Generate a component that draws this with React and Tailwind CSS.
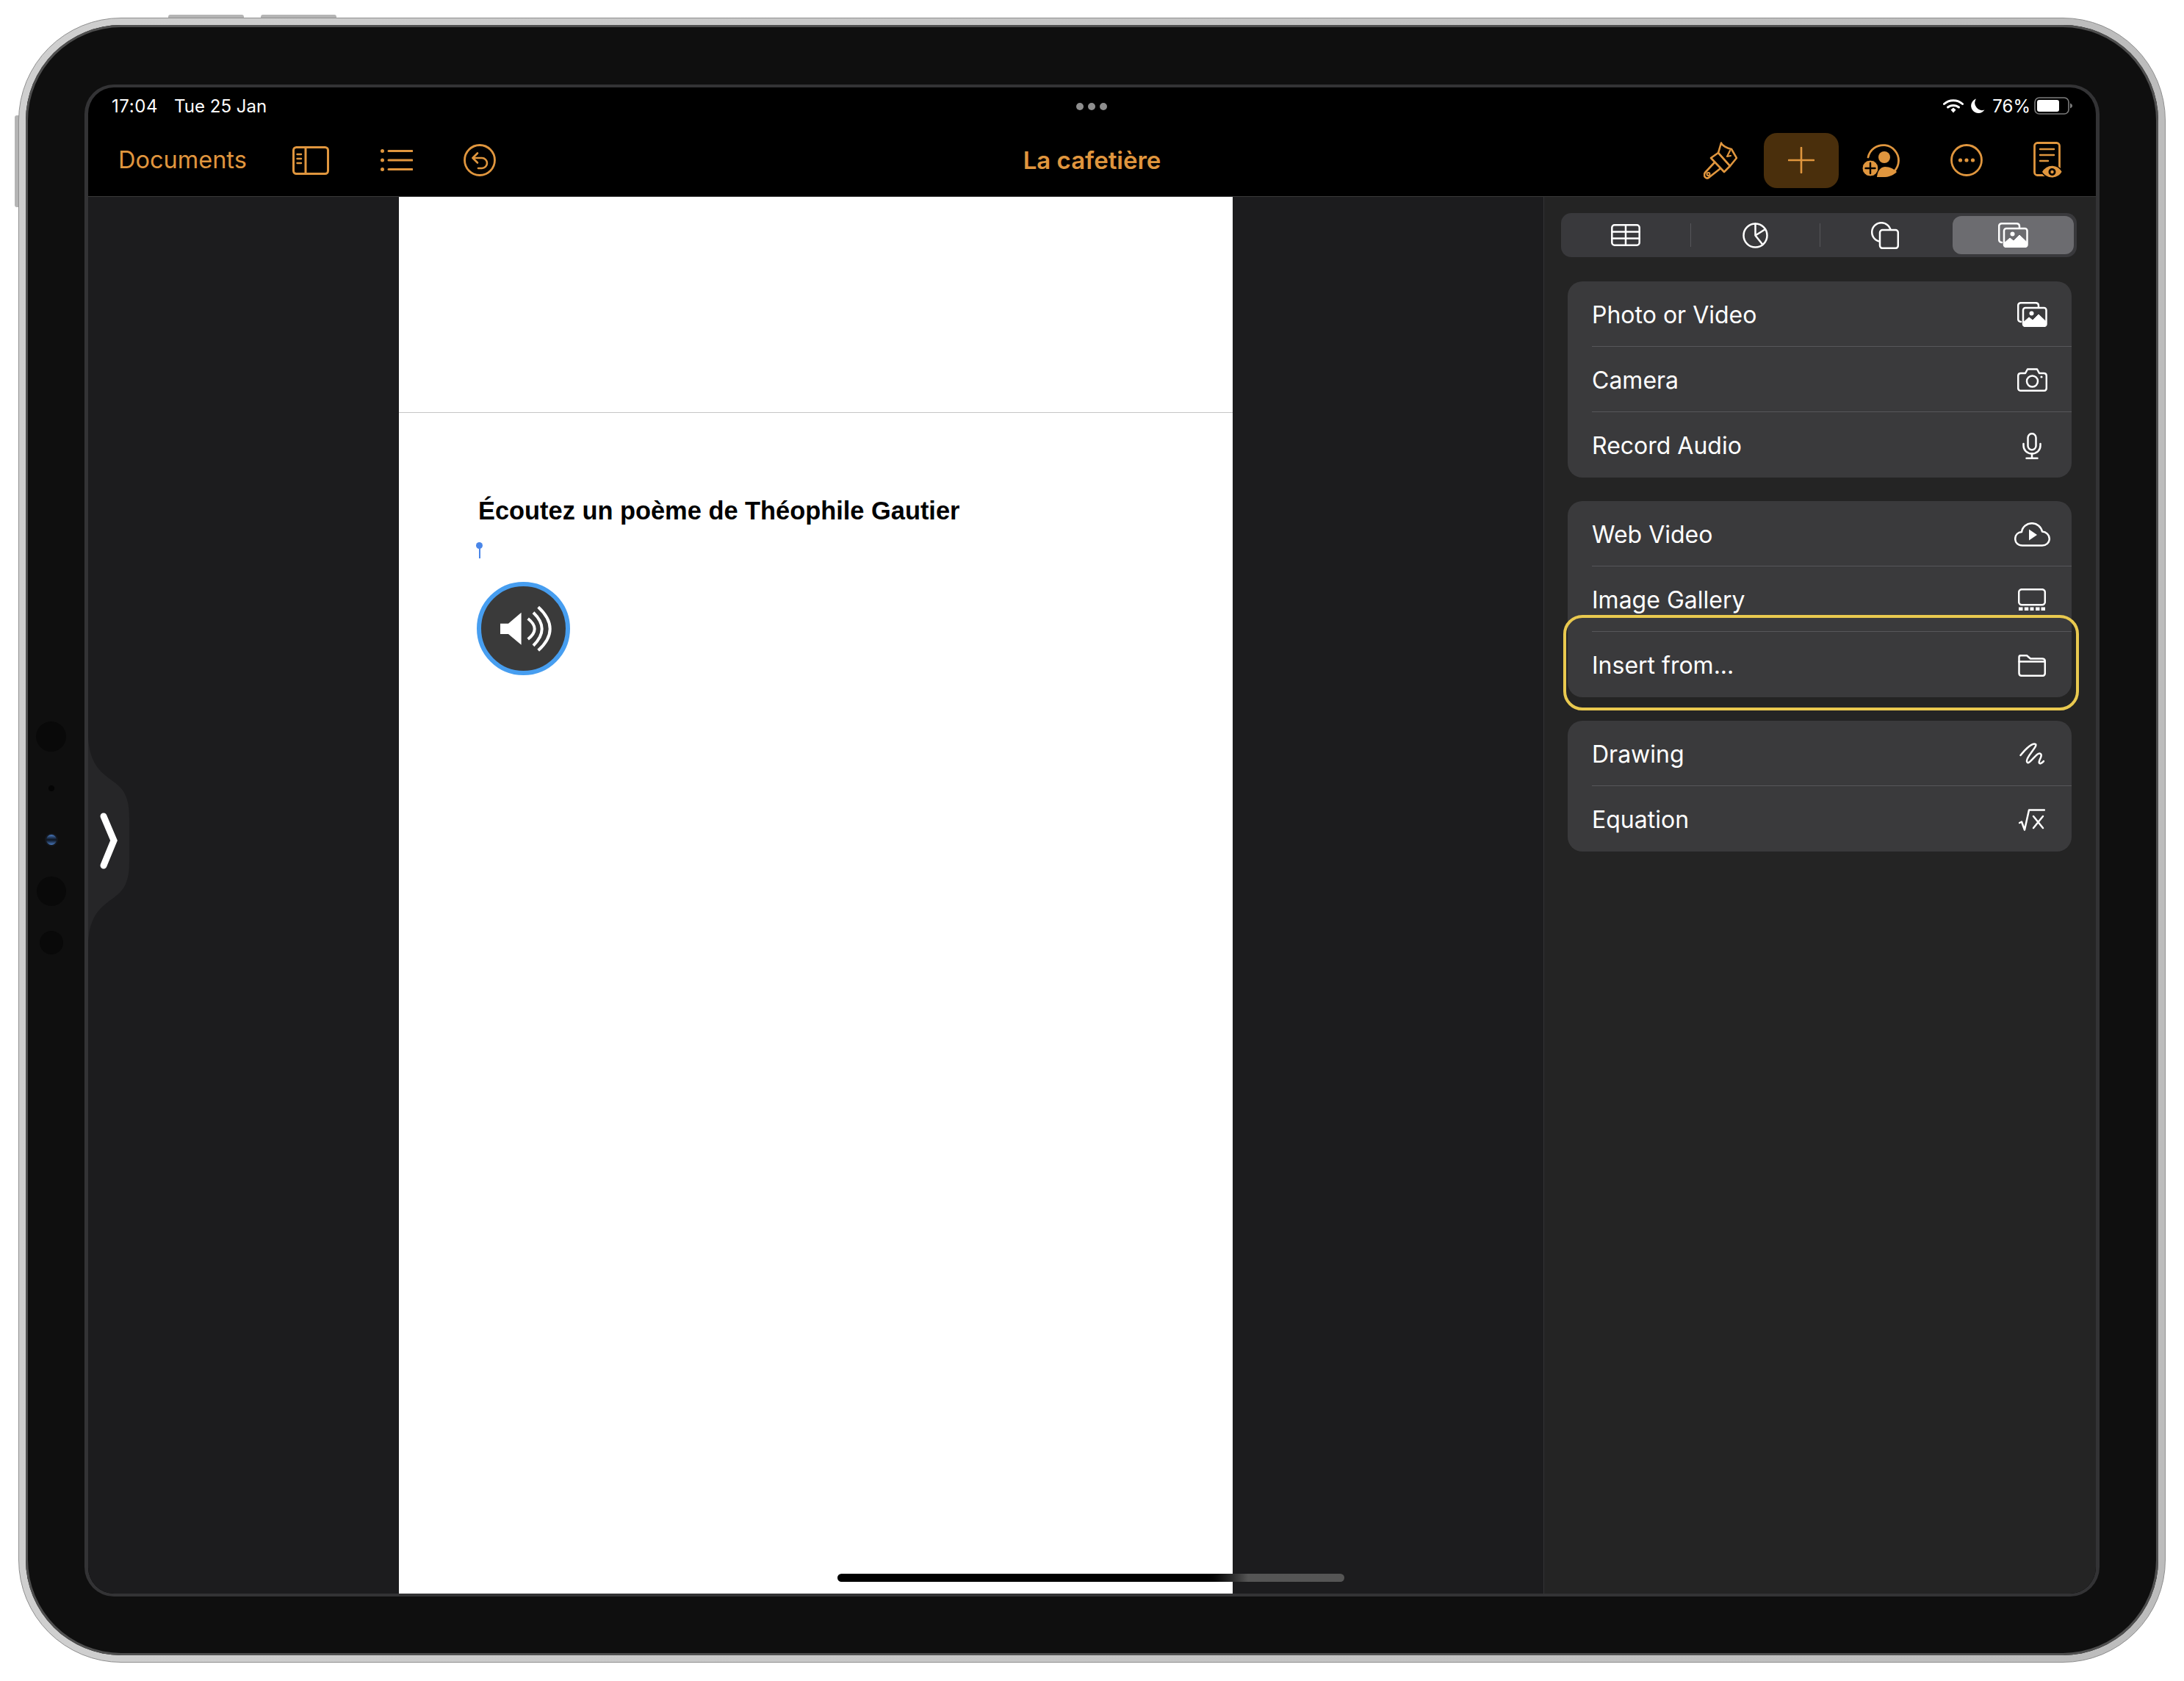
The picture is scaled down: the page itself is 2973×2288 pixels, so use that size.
const ORANGE = "text-[#e0963e]";

const Line = ({ w, h, box, children, className = "" }) => (
  <svg
    width={w}
    height={h}
    viewBox={box || `0 0 ${w} ${h}`}
    fill="none"
    stroke="currentColor"
    strokeWidth="2.5"
    strokeLinecap="round"
    strokeLinejoin="round"
    className={className}
  >
    {children}
  </svg>
);

const PanelIcon = () => (
  <Line w={50} h={39} className={ORANGE}>
    <rect x="1.5" y="1.5" width="47" height="36" rx="4" strokeWidth="3" />
    <path d="M18 2V37" strokeWidth="3" />
    <path d="M6.5 11H12M6.5 17H12M6.5 23H12" strokeWidth="2.4" />
  </Line>
);

const ListIcon = () => (
  <Line w={44} h={30} className={ORANGE}>
    <path d="M11 2.5H43M11 15H43M11 27.5H43" strokeWidth="3" />
    <circle cx="2.5" cy="2.5" r="2.5" fill="currentColor" stroke="none" />
    <circle cx="2.5" cy="15" r="2.5" fill="currentColor" stroke="none" />
    <circle cx="2.5" cy="27.5" r="2.5" fill="currentColor" stroke="none" />
  </Line>
);

const UndoIcon = () => (
  <Line w={44} h={44} className={ORANGE}>
    <circle cx="22" cy="22" r="20.5" strokeWidth="2.8" />
    <path d="M13 19H25A7 7 0 0 1 25 33H20" strokeWidth="2.6" />
    <path d="M19 12.5L12.5 19L19 25.5" strokeWidth="2.6" />
  </Line>
);

const BrushIcon = () => (
  <Line w={46} h={51} className={ORANGE}>
    <path d="M24 1.5C25 5 32 9 38 10L45 22L36 33L20 15Z" strokeWidth="2.6" />
    <path d="M36 12L32 20L37 19" strokeWidth="2.2" />
    <path d="M10 22L20 15L36 33L28 41Z" strokeWidth="2.6" />
    <path d="M15 28L2 42C-1 47 4 52 8 48L22 37" strokeWidth="2.6" />
    <circle cx="6.5" cy="44" r="2" strokeWidth="2" />
  </Line>
);

const PlusIcon = () => (
  <Line w={36} h={36} className={ORANGE}>
    <path d="M18 1V35M1 18H35" strokeWidth="2.6" />
  </Line>
);

const CollabIcon = () => (
  <Line w={52} h={45} className={ORANGE}>
    <path d="M8 18A21 21 0 1 1 30 43.5" strokeWidth="2.8" />
    <circle cx="30" cy="18" r="8" fill="currentColor" stroke="none" />
    <path d="M20 45C21 34 27 31 31 31C38 31 43 34 47 38C43 42 37 45 30 45Z" fill="currentColor" stroke="none" />
    <circle cx="11" cy="33" r="11" fill="currentColor" stroke="#000" strokeWidth="1" />
    <path d="M11 26V40M4.500 33H17.500" stroke="#000" strokeWidth="2.4" />
  </Line>
);

const MoreIcon = () => (
  <Line w={44} h={44} className={ORANGE}>
    <circle cx="22" cy="22" r="20.5" strokeWidth="2.8" />
    <circle cx="13.5" cy="22" r="2.6" fill="currentColor" stroke="none" />
    <circle cx="22" cy="22" r="2.6" fill="currentColor" stroke="none" />
    <circle cx="30.5" cy="22" r="2.6" fill="currentColor" stroke="none" />
  </Line>
);

const DocEyeIcon = () => (
  <Line w={40} h={51} className={ORANGE}>
    <rect x="1.5" y="1.5" width="34" height="44" rx="4" strokeWidth="2.8" />
    <path d="M9 10H28M9 18H28M9 26H20" strokeWidth="2.4" />
    <path d="M11 41C18 29 33 29 39.5 41C33 52 18 52 11 41Z" fill="currentColor" stroke="#000" strokeWidth="1.5" />
    <circle cx="25.5" cy="41" r="5" fill="#000" stroke="none" />
    <circle cx="25.5" cy="41" r="2.2" fill="currentColor" stroke="none" />
  </Line>
);

const WifiIcon = () => (
  <Line w={28} h={19} className="text-white">
    <path d="M1.5 6.5C8.5 0 19.5 0 26.5 6.5" strokeWidth="3" />
    <path d="M6.5 11C10.5 7.5 17.5 7.5 21.5 11" strokeWidth="3" />
    <path d="M10.5 14.5L14 11.5L17.5 14.5L14 18.5Z" fill="currentColor" stroke="none" />
  </Line>
);

const MoonIcon = () => (
  <svg width="19" height="20" viewBox="0 0 19 20" className="text-white">
    <path d="M7 0.5A10 10 0 1 0 18.5 15.5A10 10 0 0 1 7 0.5Z" fill="currentColor" />
  </svg>
);

const BatteryIcon = () => (
  <svg width="53" height="24" viewBox="0 0 53 24">
    <rect x="1" y="1" width="46" height="22" rx="6" fill="none" stroke="#7c7c7c" strokeWidth="1.6" />
    <rect x="4" y="4" width="30" height="16" rx="3" fill="#fff" />
    <path d="M49 8.5C51 9.5 52 10.5 52 12C52 13.5 51 14.5 49 15.5Z" fill="#7c7c7c" />
  </svg>
);

const PhotoIcon = () => (
  <Line w={41} h={34} className="text-white">
    <path d="M5 27C2.5 27 1.2 25.5 1.2 23V5C1.2 2.5 2.5 1.2 5 1.2H25C27.5 1.2 29 2.5 29 5V7" />
    <rect x="8" y="8" width="31.5" height="25" rx="3" />
    <path d="M8 31V28L16 21L21 25L29 17L39.5 27V30C39.5 32 38.5 33 36.5 33H11C9 33 8 32 8 31Z" fill="currentColor" stroke="currentColor" strokeWidth="1" />
    <circle cx="19.5" cy="15.5" r="3" fill="currentColor" stroke="none" />
  </Line>
);

const CameraIcon = () => (
  <Line w={41} h={32}>
    <path d="M5 7H11L14 1.5H27L30 7H36C38.5 7 39.8 8.5 39.8 11V27C39.8 29.5 38.5 30.8 36 30.8H5C2.5 30.8 1.2 29.5 1.2 27V11C1.2 8.5 2.5 7 5 7Z" />
    <circle cx="20.5" cy="18" r="7.5" />
    <circle cx="33" cy="12" r="1.6" fill="currentColor" stroke="none" />
  </Line>
);

const MicIcon = () => (
  <Line w={26} h={36}>
    <rect x="7.5" y="1.2" width="11" height="22" rx="5.5" />
    <path d="M1.5 15V17.5C1.5 24 6.5 28.5 13 28.5C19.5 28.5 24.5 24 24.5 17.5V15" />
    <path d="M13 28.5V34.8M5.5 34.8H20.5" />
  </Line>
);

const CloudIcon = () => (
  <Line w={49} h={33}>
    <path d="M11 31.5C5 31.5 1.2 27.5 1.2 22.5C1.2 17 5 13.5 10 13C11 6 17 1.2 24 1.2C31 1.2 36.5 6 38 12.5C43.5 13 47.8 17 47.8 22.5C47.8 27.5 43.5 31.5 38 31.5Z" />
    <path d="M20 9.5L31 17L20 24.5Z" fill="currentColor" stroke="none" />
  </Line>
);

const GalleryIcon = () => (
  <Line w={38} h={30}>
    <rect x="1.2" y="1.2" width="35.6" height="21" rx="4" />
    <path
      d="M1 25.500h5.500v4.500H1zM8.800 25.500h5.500v4.500H8.800zM16.500 25.500h5v4.500h-5zM24 25.500h5.500v4.500H24zM31.500 25.500h5.500v4.500h-5.500z"
      fill="currentColor"
      stroke="none"
    />
  </Line>
);

const FolderIcon = () => (
  <Line w={38} h={30}>
    <path d="M1.500 8V3.500C1.500 2 2.500 1.200 4 1.200H12L17 5.500H33C35.500 5.500 36.800 7 36.800 9V25C36.800 27.500 35.500 28.800 33 28.800H5C2.500 28.800 1.500 27.500 1.500 25Z" />
    <path d="M1.500 9.500H36.800" />
  </Line>
);

const DrawingIcon = () => (
  <Line w={34} h={31}>
    <path d="M1.500 17C8 9 18 -1 22 2C25 5 9 19 10 25C11 32 19 20 24 16C28 13 31 15 29 20C27 24 25 29 29 28C31 27.500 32 26 33 25" />
  </Line>
);

const SqrtIcon = () => (
  <Line w={36} h={30}>
    <path d="M1 19L4 17.500L8 28.500L14 1.500H35" />
    <path d="M20 10L33 26M33 10L20 26" />
  </Line>
);

const TableIcon = () => (
  <Line w={40} h={30} className="text-white">
    <rect x="1.300" y="1.300" width="37.400" height="27.400" rx="3.500" />
    <path d="M1.300 10.500H38.700M1.300 19.500H38.700M20 1.300V28.700" />
  </Line>
);

const PieIcon = () => (
  <Line w={35} h={35} className="text-white">
    <circle cx="17.500" cy="17.500" r="16" />
    <path d="M17.500 1.500V17.500L31 9M17.500 17.500L27.500 30" />
  </Line>
);

const ShapesIcon = () => (
  <Line w={38} h={37} className="text-white">
    <circle cx="14" cy="14" r="12.800" />
    <rect x="12" y="11" width="24.800" height="24.800" rx="3.500" fill="#39393c" />
  </Line>
);

const SpeakerIcon = () => (
  <svg width="115" height="115" viewBox="6 6 115 115" fill="none">
    <path d="M32 56.700H43L60.600 41.700V85.700L43 71H32Z" fill="#fff" />
    <path d="M69.700 50Q87.700 64 69.700 78M77 41.700Q100.400 64 77 86.700M83.700 34.300Q115.700 64 83.700 93.300" stroke="#fff" strokeWidth="4" />
  </svg>
);

const groups = [
  [
    ["Photo or Video", PhotoIcon],
    ["Camera", CameraIcon],
    ["Record Audio", MicIcon],
  ],
  [
    ["Web Video", CloudIcon],
    ["Image Gallery", GalleryIcon],
    ["Insert from...", FolderIcon],
  ],
  [
    ["Drawing", DrawingIcon],
    ["Equation", SqrtIcon],
  ],
];

const StatusBar = () => (
  <div className="h-[50px] flex items-center justify-between pl-[32px] pr-[31px] relative text-white text-[24px] font-['Inter',sans-serif]">
    <div className="flex gap-[22px] pt-[1px]">
      <span className="tracking-[0.6px]">17:04</span>
      <span>Tue 25 Jan</span>
    </div>
    <div className="absolute left-[1345px] top-[21px] flex gap-[6px]">
      <span className="w-[10px] h-[10px] rounded-full bg-[#8e8e8e]" />
      <span className="w-[10px] h-[10px] rounded-full bg-[#8e8e8e]" />
      <span className="w-[10px] h-[10px] rounded-full bg-[#8e8e8e]" />
    </div>
    <div className="flex items-center">
      <WifiIcon />
      <span className="ml-[10px]">
        <MoonIcon />
      </span>
      <span className="ml-[10px] pt-[1px]">76%</span>
      <span className="ml-[5px]">
        <BatteryIcon />
      </span>
    </div>
  </div>
);

const ToolBar = () => (
  <div className="h-[99px] border-b border-[#3a3a3a] flex items-center relative font-['Inter',sans-serif]">
    <div className="flex items-center pl-[41px]">
      <span className={`text-[32.500px] pt-[1px] w-[237px] ${ORANGE}`}>Documents</span>
      <PanelIcon />
      <span className="ml-[70px]">
        <ListIcon />
      </span>
      <span className="ml-[69px]">
        <UndoIcon />
      </span>
    </div>
    <div className={`absolute inset-x-0 text-center text-[33px] pt-[1px] font-semibold ${ORANGE}`}>
      La cafetière
    </div>
    <div className="ml-auto flex items-center pr-[45px]">
      <BrushIcon />
      <span className="ml-[36px] w-[102px] h-[75px] rounded-[18px] bg-[#4a2f0c] flex items-center justify-center">
        <PlusIcon />
      </span>
      <span className="ml-[32px]">
        <CollabIcon />
      </span>
      <span className="ml-[68px]">
        <MoreIcon />
      </span>
      <span className="ml-[69px]">
        <DocEyeIcon />
      </span>
    </div>
  </div>
);

const Segments = () => (
  <div className="ml-[23px] w-[702px] h-[60px] rounded-[14px] bg-[#39393c] flex items-center">
    <div className="w-[176px] flex justify-center">
      <TableIcon />
    </div>
    <div className="w-px h-[32px] bg-[#56565a]" />
    <div className="w-[175px] flex justify-center">
      <PieIcon />
    </div>
    <div className="w-px h-[32px] bg-[#56565a]" />
    <div className="w-[175px] flex justify-center">
      <ShapesIcon />
    </div>
    <div className="w-[174px] flex justify-center">
      <div className="w-[165px] h-[52px] rounded-[12px] bg-[#6c6c70] flex items-center justify-center">
        <PhotoIcon />
      </div>
    </div>
  </div>
);

const Sidebar = () => (
  <div className="w-[752px] h-full bg-[#242424] border-l border-[#333335] pt-[22px] relative font-['Inter',sans-serif]">
    <Segments />
    <div className="ml-[32px] w-[686px] mt-[33px] flex flex-col gap-[32px]">
      {groups.map((rows, g) => (
        <div key={g} className="rounded-[20px] bg-[#3a3a3c] overflow-hidden text-white text-[32px]">
          {rows.map(([label, Icon], i) => (
            <div key={label} className="h-[89px] pl-[33px]">
              <div
                className={`h-full pt-[2px] flex items-center justify-between pr-[24px] ${
                  i < rows.length - 1 ? "border-b border-[#57575a]" : ""
                }`}
              >
                <span className="pt-[1px]">{label}</span>
                <span className="w-[60px] flex justify-center">
                  <Icon />
                </span>
              </div>
            </div>
          ))}
        </div>
      ))}
    </div>
    <div className="absolute left-[26px] top-[569px] w-[702px] h-[130px] rounded-[26px] border-[4px] border-[#e9c94f]" />
  </div>
);

const Page = () => (
  <div className="w-[1135px] h-full bg-white">
    <div className="h-[294px] border-b border-[#c6c6c6]" />
    <div className="pl-[108px] pt-[113px]">
      <h1 className="text-[34.400px] leading-[40px] font-bold text-black font-['Liberation_Sans',sans-serif]">
        Écoutez un poème de Théophile Gautier
      </h1>
      <div className="mt-[23px] -ml-[3px] w-[9px] flex flex-col items-center">
        <span className="w-[9px] h-[9px] rounded-full bg-[#4a86e8]" />
        <span className="w-[2px] h-[13px] bg-[#4a86e8]" />
      </div>
      <div className="mt-[32px] -ml-[2px] w-[127px] h-[127px] rounded-full bg-[#3a3a3a] border-[6px] border-[#479ef0]">
        <SpeakerIcon />
      </div>
    </div>
  </div>
);

const Canvas = () => (
  <div className="flex-1 h-full bg-[#1c1c1e] relative pl-[423px]">
    <Page />
    <svg width="56" height="280" viewBox="0 0 56 280" fill="none" className="absolute left-0 top-[735px]">
      <path
        d="M0 0C2 40 20 50 36 62C50 72 56 85 56 110V170C56 195 50 208 36 218C20 230 2 240 0 280Z"
        fill="#262628"
      />
      <path d="M21 108L35 141L21 175" stroke="#fff" strokeWidth="9" strokeLinecap="round" />
    </svg>
    <div className="absolute left-[1020px] top-[1874px] w-[690px] h-[11px] rounded-full bg-linear-to-r from-black from-[72%] to-[#555555] to-[81%]" />
  </div>
);

const BezelDots = () => (
  <div className="absolute left-[14px] top-[948px] w-[41px] flex flex-col items-center">
    <span className="w-[41px] h-[41px] rounded-full bg-[#090909]" />
    <span className="w-[8px] h-[8px] mt-[46px] rounded-full bg-[#050505]" />
    <span className="w-[18px] h-[18px] mt-[57px] rounded-full border-[2px] border-[#15181d] bg-linear-to-b from-[#4a7cc4] via-[#0c1420] via-50% to-[#4a7cc4]" />
    <span className="w-[40px] h-[40px] mt-[41px] rounded-full bg-[#090909]" />
    <span className="w-[32px] h-[32px] mt-[34px] rounded-full bg-[#090909]" />
  </div>
);

export default function App() {
  return (
    <div className="w-[2973px] h-[2288px] bg-white pl-[25px] pt-[24px] overflow-hidden">
      <div className="relative w-[2923px] h-[2239px]">
        <div className="absolute left-[204px] -top-[4px] w-[103px] h-[6px] rounded-t-[3px] bg-[#b4b4b4]" />
        <div className="absolute left-[330px] -top-[4px] w-[103px] h-[6px] rounded-t-[3px] bg-[#b4b4b4]" />
        <div className="absolute -left-[5px] top-[133px] w-[6px] h-[125px] rounded-l-[3px] bg-[#b4b4b4]" />
        <div className="relative w-full h-full rounded-[140px] border border-[#8f8f8f] bg-linear-to-r from-[#cfcfcf] to-[#bcbcbc] p-[9px]">
          <div className="relative w-full h-full rounded-[130px] bg-[#0f0f0f] shadow-[inset_0_0_0_3px_#4f4f4f] pl-[80px] pr-[80px] pt-[81px] pb-[80px]">
            <BezelDots />
            <div className="w-full h-full rounded-[40px] border-x-[5px] border-y-[4px] border-[#333335] bg-black overflow-hidden flex flex-col">
              <StatusBar />
              <ToolBar />
              <div className="flex-1 min-h-0 flex text-white">
                <Canvas />
                <Sidebar />
              </div>
            </div>
          </div>
        </div>
      </div>
    </div>
  );
}
